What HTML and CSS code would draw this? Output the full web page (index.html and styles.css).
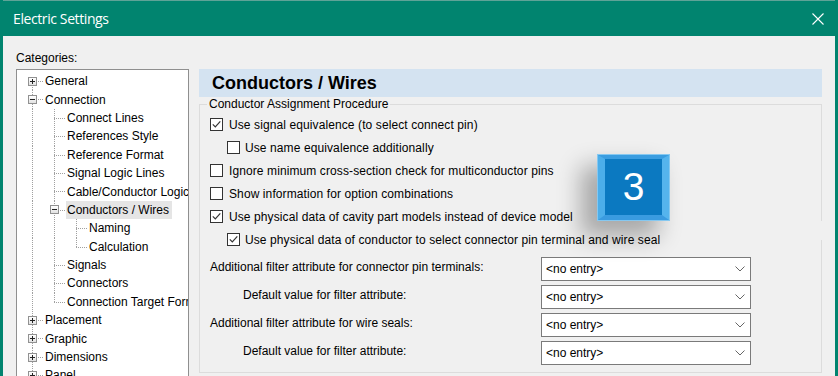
FILE: index.html
```html
<!DOCTYPE html>
<html>
<head>
<meta charset="utf-8">
<link rel="stylesheet" href="styles.css">
</head>
<body>
<div class="window">
  <div class="titlebar">
    <span class="title">Electric Settings</span>
    <svg class="close" width="12" height="12" viewBox="0 0 12 12"><path d="M0.5 0.5 L11.5 11.5 M11.5 0.5 L0.5 11.5" stroke="#fff" stroke-width="1.1" fill="none"/></svg>
  </div>
  <div class="content">
    <div class="categories">Categories:</div>
    <div class="tree">
      <div class="row"><span class="cell first"><span class="exp plus"></span></span><span class="label">General</span></div>
      <div class="row"><span class="cell tee"><span class="exp minus"></span></span><span class="label">Connection</span></div>
      <div class="row"><span class="cell pipe"></span><span class="cell tee"></span><span class="label">Connect Lines</span></div>
      <div class="row"><span class="cell pipe"></span><span class="cell tee"></span><span class="label">References Style</span></div>
      <div class="row"><span class="cell pipe"></span><span class="cell tee"></span><span class="label">Reference Format</span></div>
      <div class="row"><span class="cell pipe"></span><span class="cell tee"></span><span class="label">Signal Logic Lines</span></div>
      <div class="row"><span class="cell pipe"></span><span class="cell tee"></span><span class="label">Cable/Conductor Logic</span></div>
      <div class="row"><span class="cell pipe"></span><span class="cell tee"><span class="exp minus"></span></span><span class="label sel">Conductors / Wires</span></div>
      <div class="row"><span class="cell pipe"></span><span class="cell pipe"></span><span class="cell tee"></span><span class="label">Naming</span></div>
      <div class="row"><span class="cell pipe"></span><span class="cell pipe"></span><span class="cell elbow"></span><span class="label">Calculation</span></div>
      <div class="row"><span class="cell pipe"></span><span class="cell tee"></span><span class="label">Signals</span></div>
      <div class="row"><span class="cell pipe"></span><span class="cell tee"></span><span class="label">Connectors</span></div>
      <div class="row"><span class="cell pipe"></span><span class="cell elbow"></span><span class="label">Connection Target Format</span></div>
      <div class="row"><span class="cell tee"><span class="exp plus"></span></span><span class="label">Placement</span></div>
      <div class="row"><span class="cell tee"><span class="exp plus"></span></span><span class="label">Graphic</span></div>
      <div class="row"><span class="cell tee"><span class="exp plus"></span></span><span class="label">Dimensions</span></div>
      <div class="row"><span class="cell tee"><span class="exp plus"></span></span><span class="label">Panel</span></div>
    </div>
    <div class="panel">
      <div class="header">Conductors / Wires</div>
      <fieldset class="group">
        <legend>Conductor Assignment Procedure</legend>
        <div class="check"><span class="box"><svg viewBox="0 0 11 11"><path d="M1.8 5.4 L4.3 7.9 L9.3 2.4" stroke="#333" stroke-width="1.2" fill="none"/></svg></span>Use signal equivalence (to select connect pin)</div>
        <div class="check sub"><span class="box"></span>Use name equivalence additionally</div>
        <div class="check"><span class="box"></span>Ignore minimum cross-section check for multiconductor pins</div>
        <div class="check"><span class="box"></span>Show information for option combinations</div>
        <div class="check"><span class="box"><svg viewBox="0 0 11 11"><path d="M1.8 5.4 L4.3 7.9 L9.3 2.4" stroke="#333" stroke-width="1.2" fill="none"/></svg></span>Use physical data of cavity part models instead of device model</div>
        <div class="check sub"><span class="box"><svg viewBox="0 0 11 11"><path d="M1.8 5.4 L4.3 7.9 L9.3 2.4" stroke="#333" stroke-width="1.2" fill="none"/></svg></span>Use physical data of conductor to select connector pin terminal and wire seal</div>
        <div class="filters">
          <div class="flabel">Additional filter attribute for connector pin terminals:</div>
          <div class="select"><span>&lt;no entry&gt;</span><svg width="10" height="6" viewBox="0 0 10 6"><path d="M0.5 0.5 L5 5 L9.5 0.5" stroke="#666" fill="none"/></svg></div>
          <div class="flabel sub">Default value for filter attribute:</div>
          <div class="select"><span>&lt;no entry&gt;</span><svg width="10" height="6" viewBox="0 0 10 6"><path d="M0.5 0.5 L5 5 L9.5 0.5" stroke="#666" fill="none"/></svg></div>
          <div class="flabel">Additional filter attribute for wire seals:</div>
          <div class="select"><span>&lt;no entry&gt;</span><svg width="10" height="6" viewBox="0 0 10 6"><path d="M0.5 0.5 L5 5 L9.5 0.5" stroke="#666" fill="none"/></svg></div>
          <div class="flabel sub">Default value for filter attribute:</div>
          <div class="select"><span>&lt;no entry&gt;</span><svg width="10" height="6" viewBox="0 0 10 6"><path d="M0.5 0.5 L5 5 L9.5 0.5" stroke="#666" fill="none"/></svg></div>
        </div>
      </fieldset>
    </div>
  </div>
  <div class="badge">3</div>
</div>
</body>
</html>
```
FILE: styles.css
```css
* { box-sizing: border-box; }
html, body { margin: 0; padding: 0; }
body {
  width: 838px;
  height: 376px;
  overflow: hidden;
  font-family: "Liberation Sans", Arial, sans-serif;
  font-size: 12px;
  color: #000;
}
.window {
  position: relative;
  width: 838px;
  height: 376px;
  background: #f0f0f0;
  border-left: 3px solid #01846f;
  border-right: 3px solid #01846f;
  overflow: hidden;
}
.titlebar {
  height: 36px;
  background: #01846f;
  border-top: 1px solid #5fa397;
  display: flex;
  align-items: center;
  justify-content: space-between;
  padding: 0 11px 0 10px;
}
.title {
  font-family: "Open Sans", "Noto Sans", sans-serif;
  font-size: 14px;
  letter-spacing: -0.4px;
  color: #fff;
}
.close { display: block; }
.content {
  display: grid;
  grid-template-columns: 173px 623px;
  grid-template-rows: 14px auto;
  column-gap: 10px;
  row-gap: 4px;
  padding: 15px 13px 0;
}
.categories { grid-column: 1; grid-row: 1; line-height: 14px; }
.tree {
  grid-column: 1;
  grid-row: 2;
  height: 320px;
  background: #fff;
  border: 1px solid #8f8f8f;
  padding: 2px 0 0 4px;
  overflow: hidden;
}
.row {
  display: flex;
  height: 18.4px;
  white-space: nowrap;
}
.cell {
  flex: none;
  width: 22px;
  height: 100%;
  display: flex;
  align-items: center;
  background-repeat: no-repeat;
}
.pipe {
  background-image: repeating-linear-gradient(to bottom, #a0a0a0 0 1px, transparent 1px 2px);
  background-size: 1px 100%;
  background-position: 11px 0;
}
.tee {
  background-image: repeating-linear-gradient(to bottom, #a0a0a0 0 1px, transparent 1px 2px),
                    repeating-linear-gradient(to right, #a0a0a0 0 1px, transparent 1px 2px);
  background-size: 1px 100%, 11px 1px;
  background-position: 11px 0, 11px 9px;
}
.elbow {
  background-image: repeating-linear-gradient(to bottom, #a0a0a0 0 1px, transparent 1px 2px),
                    repeating-linear-gradient(to right, #a0a0a0 0 1px, transparent 1px 2px);
  background-size: 1px 9px, 11px 1px;
  background-position: 11px 0, 11px 9px;
}
.first {
  background-image: repeating-linear-gradient(to bottom, #a0a0a0 0 1px, transparent 1px 2px),
                    repeating-linear-gradient(to right, #a0a0a0 0 1px, transparent 1px 2px);
  background-size: 1px 10px, 11px 1px;
  background-position: 11px 9px, 11px 9px;
}
.exp {
  width: 9px;
  height: 9px;
  margin-left: 7px;
  border: 1px solid #919191;
  background-repeat: no-repeat;
}
.exp.minus {
  background-image: linear-gradient(#222, #222), linear-gradient(#fff, #e2e2e2);
  background-size: 5px 1px, 100% 100%;
  background-position: 1px 3px, 0 0;
}
.exp.plus {
  background-image: linear-gradient(#222, #222), linear-gradient(#222, #222), linear-gradient(#fff, #e2e2e2);
  background-size: 5px 1px, 1px 5px, 100% 100%;
  background-position: 1px 3px, 3px 1px, 0 0;
}
.label {
  margin-left: 1px;
  padding: 0 3px 0 1px;
  height: 18px;
  line-height: 18px;
  align-self: center;
}
.label.sel { background: #e5e5e5; }

.panel {
  grid-column: 2;
  grid-row: 2;
  display: flex;
  flex-direction: column;
}
.header {
  height: 28px;
  background: #d4e3f1;
  padding-left: 13px;
  font-size: 18px;
  font-weight: bold;
  line-height: 29px;
}
.group {
  position: relative;
  margin: 0;
  min-width: 0;
  padding: 2px 7px 7px;
  border: 1px solid #dcdcdc;
}
.group::after {
  content: "";
  position: absolute;
  right: -1px;
  top: 110px;
  width: 1px;
  height: 19px;
  background: #f0f0f0;
}
.group legend {
  padding: 0 2px;
  line-height: 14px;
}
.check {
  display: flex;
  align-items: center;
  gap: 6px;
  height: 23px;
  padding-left: 3px;
  white-space: nowrap;
  letter-spacing: 0.1px;
}
.check.sub { padding-left: 20px; gap: 5px; }
.box {
  flex: none;
  width: 13px;
  height: 13px;
  border: 1px solid #333;
  background: #fff;
  display: flex;
}
.box svg { width: 11px; height: 11px; display: block; }
.filters {
  display: grid;
  grid-template-columns: 334px 210px;
  grid-auto-rows: 24px;
  row-gap: 4px;
  margin-top: 6px;
}
.flabel {
  padding: 3px 0 0 3px;
  line-height: 14px;
  white-space: nowrap;
}
.flabel.sub { padding-left: 36px; }
.select {
  display: flex;
  align-items: center;
  justify-content: space-between;
  padding: 0 5px 0 4px;
  border: 1px solid #7a7a7a;
  background: #fff;
}
.select svg { display: block; }

.badge {
  position: absolute;
  left: 595px;
  top: 155px;
  width: 71px;
  height: 65px;
  display: flex;
  align-items: center;
  justify-content: center;
  background: #0b79c1;
  border-left: 7px solid #4caeea;
  border-right: 7px solid #55b4ed;
  border-top: 4px solid #3a9de0;
  border-bottom: 5px solid #3a9be0;
  outline: 1px solid #86c8f0;
  color: #fff;
  font-family: "Liberation Sans", Arial, sans-serif;
  font-size: 39px;
  box-shadow: -14px 14px 22px 3px rgba(0, 0, 0, 0.3);
}
```
